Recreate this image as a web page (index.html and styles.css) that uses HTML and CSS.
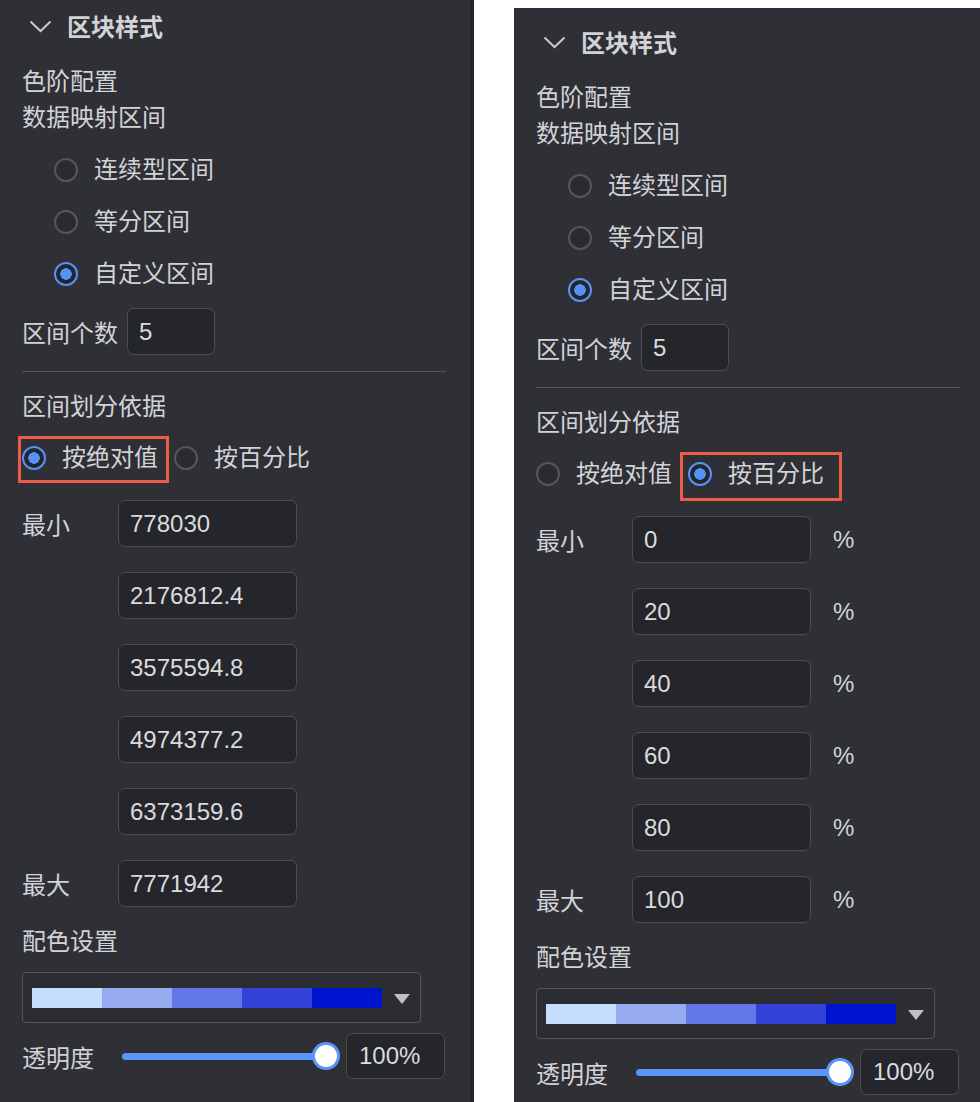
FILE: index.html
```html
<!DOCTYPE html>
<html lang="zh-CN">
<head>
<meta charset="utf-8">
<title>区块样式</title>
<link rel="stylesheet" href="styles.css">
</head>
<body>
<div class="stage">

  <section class="panel panel--clipped">
    <div class="section-head">
      <svg class="chevron" width="23" height="13" viewBox="0 0 23 13"><path d="M1.5 1.5 L11.5 11 L21.5 1.5" fill="none" stroke="#c9cacd" stroke-width="2"/></svg>
      <span class="section-title">区块样式</span>
    </div>
    <div class="label">色阶配置</div>
    <div class="label">数据映射区间</div>
    <div class="radio-list">
      <div class="radio-item"><span class="radio"></span><span class="radio-text">连续型区间</span></div>
      <div class="radio-item"><span class="radio"></span><span class="radio-text">等分区间</span></div>
      <div class="radio-item"><span class="radio radio--on"></span><span class="radio-text">自定义区间</span></div>
    </div>
    <div class="count-row">
      <span class="count-label">区间个数</span>
      <span class="input input--count">5</span>
    </div>
    <div class="divider"></div>
    <div class="label label--sub">区间划分依据</div>
    <div class="radio-row">
      <div class="radio-item radio-item--inline"><span class="radio radio--on"></span><span class="radio-text">按绝对值</span><span class="highlight highlight--abs"></span></div>
      <div class="radio-item radio-item--inline"><span class="radio"></span><span class="radio-text">按百分比</span></div>
    </div>
    <div class="ranges">
      <div class="range-row"><span class="range-label">最小</span><span class="input input--range">778030</span></div>
      <div class="range-row"><span class="range-label"></span><span class="input input--range">2176812.4</span></div>
      <div class="range-row"><span class="range-label"></span><span class="input input--range">3575594.8</span></div>
      <div class="range-row"><span class="range-label"></span><span class="input input--range">4974377.2</span></div>
      <div class="range-row"><span class="range-label"></span><span class="input input--range">6373159.6</span></div>
      <div class="range-row"><span class="range-label">最大</span><span class="input input--range">7771942</span></div>
    </div>
    <div class="label label--color">配色设置</div>
    <div class="color-select">
      <div class="color-bar">
        <span class="swatch s1"></span><span class="swatch s2"></span><span class="swatch s3"></span><span class="swatch s4"></span><span class="swatch s5"></span>
      </div>
      <svg class="caret" width="16" height="10" viewBox="0 0 16 10"><path d="M0 0 H16 L8 10 Z" fill="#bfc0c5"/></svg>
    </div>
    <div class="opacity-row">
      <span class="opacity-label">透明度</span>
      <div class="slider"><span class="slider-track"></span><span class="slider-knob"></span></div>
      <span class="input input--pct">100%</span>
    </div>
  </section>

  <div class="gap"></div>

  <section class="panel panel--right">
    <div class="section-head">
      <svg class="chevron" width="23" height="13" viewBox="0 0 23 13"><path d="M1.5 1.5 L11.5 11 L21.5 1.5" fill="none" stroke="#c9cacd" stroke-width="2"/></svg>
      <span class="section-title">区块样式</span>
    </div>
    <div class="label">色阶配置</div>
    <div class="label">数据映射区间</div>
    <div class="radio-list">
      <div class="radio-item"><span class="radio"></span><span class="radio-text">连续型区间</span></div>
      <div class="radio-item"><span class="radio"></span><span class="radio-text">等分区间</span></div>
      <div class="radio-item"><span class="radio radio--on"></span><span class="radio-text">自定义区间</span></div>
    </div>
    <div class="count-row">
      <span class="count-label">区间个数</span>
      <span class="input input--count">5</span>
    </div>
    <div class="divider"></div>
    <div class="label label--sub">区间划分依据</div>
    <div class="radio-row">
      <div class="radio-item radio-item--inline"><span class="radio"></span><span class="radio-text">按绝对值</span></div>
      <div class="radio-item radio-item--inline"><span class="radio radio--on"></span><span class="radio-text">按百分比</span><span class="highlight highlight--pct"></span></div>
    </div>
    <div class="ranges">
      <div class="range-row"><span class="range-label">最小</span><span class="input input--range">0</span><span class="unit">%</span></div>
      <div class="range-row"><span class="range-label"></span><span class="input input--range">20</span><span class="unit">%</span></div>
      <div class="range-row"><span class="range-label"></span><span class="input input--range">40</span><span class="unit">%</span></div>
      <div class="range-row"><span class="range-label"></span><span class="input input--range">60</span><span class="unit">%</span></div>
      <div class="range-row"><span class="range-label"></span><span class="input input--range">80</span><span class="unit">%</span></div>
      <div class="range-row"><span class="range-label">最大</span><span class="input input--range">100</span><span class="unit">%</span></div>
    </div>
    <div class="label label--color">配色设置</div>
    <div class="color-select">
      <div class="color-bar">
        <span class="swatch s1"></span><span class="swatch s2"></span><span class="swatch s3"></span><span class="swatch s4"></span><span class="swatch s5"></span>
      </div>
      <svg class="caret" width="16" height="10" viewBox="0 0 16 10"><path d="M0 0 H16 L8 10 Z" fill="#bfc0c5"/></svg>
    </div>
    <div class="opacity-row">
      <span class="opacity-label">透明度</span>
      <div class="slider"><span class="slider-track"></span><span class="slider-knob"></span></div>
      <span class="input input--pct">100%</span>
    </div>
  </section>

</div>
</body>
</html>
```

FILE: styles.css
```css
* { box-sizing: border-box; }

html, body {
  margin: 0;
  padding: 0;
  background: #ffffff;
  height: 1102px;
  overflow: hidden;
}

body {
  font-family: "Liberation Sans", "Noto Sans CJK SC", sans-serif;
  font-size: 24px;
  color: #d2d3d6;
}

.stage {
  display: flex;
  align-items: flex-start;
  height: 1102px;
}

.panel {
  background: #2f3036;
  height: 1130px;
  padding: 0 24px 0 22px;
  flex: none;
}

.panel--clipped {
  width: 474px;
  margin-top: -8px;
  border-right: 4px solid #24252a;
}

.gap {
  width: 40px;
  flex: none;
}

.panel--right {
  width: 466px;
  margin-top: 8px;
  padding-right: 20px;
}

.section-head {
  height: 72px;
  display: flex;
  align-items: center;
}

.chevron {
  margin-left: 7px;
  margin-right: 15px;
  margin-top: -3px;
}

.section-title {
  font-weight: bold;
  line-height: 36px;
}

.label {
  line-height: 36px;
  height: 36px;
  white-space: nowrap;
}

.radio-list {
  margin-top: 8px;
  padding-left: 32px;
}

.radio-item {
  height: 52px;
  display: flex;
  align-items: center;
}

.radio {
  width: 24px;
  height: 24px;
  border-radius: 50%;
  border: 2px solid #55565b;
  background: #2a2b30;
  flex: none;
  margin-right: 16px;
}

.radio--on {
  border-color: #5592f8;
  background: radial-gradient(circle, #5592f8 0 5.5px, #25262b 6px);
}

.radio-text {
  white-space: nowrap;
  line-height: 36px;
}

.count-row {
  margin-top: 8px;
  height: 47px;
  display: flex;
  align-items: center;
}

.count-label {
  width: 105px;
  flex: none;
}

.input {
  display: flex;
  align-items: center;
  height: 47px;
  padding-left: 11px;
  background: #25262b;
  border: 1.5px solid #4d4e54;
  border-radius: 7px;
  color: #dadbdd;
  white-space: nowrap;
  flex: none;
}

.input--count { width: 88px; }

.divider {
  margin-top: 16px;
  height: 1px;
  background: #56575c;
}

.label--sub { margin-top: 17px; }

.radio-row {
  margin-top: 7px;
  height: 52px;
  display: flex;
  align-items: center;
}

.radio-item--inline {
  position: relative;
  height: 40px;
  margin-right: 16px;
}

.highlight {
  position: absolute;
  border: 3px solid #f05a4b;
  pointer-events: none;
}

.highlight--abs {
  left: -4px;
  right: -11px;
  top: -2px;
  bottom: -5px;
}

.highlight--pct {
  left: -8px;
  right: -18px;
  top: -2px;
  bottom: -7px;
}

.ranges {
  margin-top: 16px;
  display: flex;
  flex-direction: column;
  gap: 25px;
}

.range-row {
  display: flex;
  align-items: center;
  height: 47px;
}

.range-label {
  width: 96px;
  flex: none;
}

.input--range { width: 179px; }

.unit {
  margin-left: 22px;
  color: #d2d3d6;
}

.label--color { margin-top: 17px; }

.color-select {
  margin-top: 12px;
  width: 399px;
  height: 51px;
  border: 1.5px solid #55565b;
  border-radius: 4px;
  background: #2c2d32;
  display: flex;
  align-items: center;
  padding-left: 8.5px;
}

.color-bar {
  display: flex;
  height: 20px;
}

.swatch {
  width: 70px;
  height: 20px;
}

.s1 { background: #c5defe; }
.s2 { background: #95aaef; }
.s3 { background: #6077e5; }
.s4 { background: #3242d8; }
.s5 { background: #0014cf; }

.caret {
  margin-left: 12px;
  margin-top: 2px;
}

.opacity-row {
  margin-top: 10px;
  height: 46px;
  display: flex;
  align-items: center;
}

.opacity-label {
  width: 100px;
  flex: none;
}

.slider {
  position: relative;
  width: 218px;
  height: 28px;
  flex: none;
}

.slider-track {
  position: absolute;
  left: 0;
  right: 14px;
  top: 10.5px;
  height: 7px;
  border-radius: 4px;
  background: #5a95fa;
}

.slider-knob {
  position: absolute;
  right: 0;
  top: 0;
  width: 28px;
  height: 28px;
  border-radius: 50%;
  background: #ffffff;
  border: 3.5px solid #5a95fa;
}

.input--pct {
  width: 99px;
  height: 46px;
  margin-left: 6px;
  padding-left: 12px;
}
```
